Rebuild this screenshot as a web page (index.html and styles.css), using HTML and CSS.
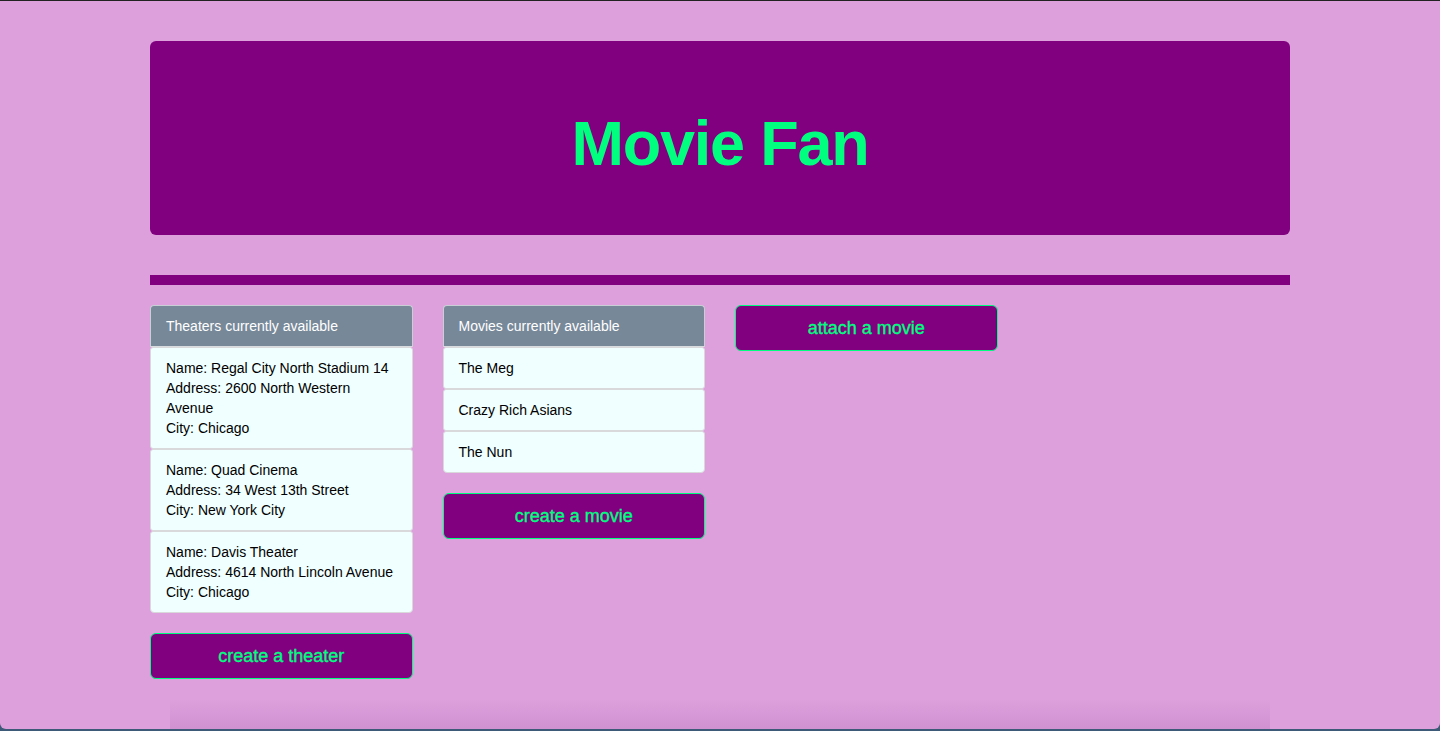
FILE: index.html
```html
<!DOCTYPE html>
<html lang="en">
<head>
<meta charset="utf-8">
<title>Movie Fan</title>
<link rel="stylesheet" href="styles.css">
</head>
<body>
<div class="window">
  <div class="container">
    <div class="jumbotron">
      <h1 class="title">Movie Fan</h1>
    </div>
    <hr class="divider">
    <div class="row">
      <div class="col">
        <ul class="list">
          <li class="list-header">Theaters currently available</li>
          <li class="list-item">Name: Regal City North Stadium 14<br>Address: 2600 North Western Avenue<br>City: Chicago</li>
          <li class="list-item">Name: Quad Cinema<br>Address: 34 West 13th Street<br>City: New York City</li>
          <li class="list-item">Name: Davis Theater<br>Address: 4614 North Lincoln Avenue<br>City: Chicago</li>
        </ul>
        <button class="btn">create a theater</button>
      </div>
      <div class="col">
        <ul class="list">
          <li class="list-header">Movies currently available</li>
          <li class="list-item">The Meg</li>
          <li class="list-item">Crazy Rich Asians</li>
          <li class="list-item">The Nun</li>
        </ul>
        <button class="btn">create a movie</button>
      </div>
      <div class="col">
        <button class="btn">attach a movie</button>
      </div>
    </div>
  </div>
  <div class="dock-shadow"></div>
</div>
</body>
</html>
```
FILE: styles.css
```css
html, body {
  margin: 0;
  padding: 0;
  height: 100%;
  overflow: hidden;
  background: #3d5a78;
}

body {
  font-family: "Liberation Sans", Helvetica, Arial, sans-serif;
  font-size: 14px;
  line-height: 20px;
  color: #000;
}

.window {
  position: relative;
  box-sizing: border-box;
  height: 729px;
  background: #dda0dd;
  border-top: 1px solid #222;
  border-radius: 0 0 6px 6px;
  overflow: hidden;
}

.container {
  width: 1140px;
  margin: 0 auto;
  padding-top: 40px;
}

.jumbotron {
  background: #800080;
  border-radius: 6px;
  padding: 48px 60px;
  text-align: center;
  margin-bottom: 40px;
}

.title {
  margin: 20px 0 10px;
  font-size: 63px;
  line-height: 68px;
  font-weight: bold;
  letter-spacing: -1.2px;
  color: #00ff7f;
}

.divider {
  margin: 0 0 20px;
  border: 0;
  height: 10px;
  background: #800080;
}

.row {
  display: flex;
  gap: 30px;
}

.col {
  width: 262.5px;
  display: flex;
  flex-direction: column;
}

.list {
  list-style: none;
  margin: 0 0 20px;
  padding: 0;
}

.list-header {
  background: #778899;
  color: #fff;
  padding: 10px 15px;
  border: 1px solid #c8d0d6;
  border-bottom: 1px solid #d8dcde;
  border-radius: 4px 4px 0 0;
}

.list-item {
  background: #f0ffff;
  padding: 10px 15px;
  border: 1px solid #d9d9db;
  border-radius: 3px;
}

.list-item:last-child {
  border-radius: 3px 3px 4px 4px;
}

.btn {
  display: block;
  width: 100%;
  box-sizing: border-box;
  background: #800080;
  color: #00ff7f;
  border: 1px solid #00ff7f;
  border-radius: 6px;
  padding: 10px 16px;
  font-family: "Liberation Sans", Helvetica, Arial, sans-serif;
  font-size: 18px;
  line-height: 24px;
  text-align: center;
  -webkit-text-stroke: 0.35px #00ff7f;
  cursor: pointer;
}

.dock-shadow {
  position: absolute;
  left: 170px;
  right: 170px;
  bottom: 0;
  height: 30px;
  background: linear-gradient(to bottom, rgba(150, 80, 150, 0), rgba(150, 80, 150, 0.18));
  pointer-events: none;
}
```
